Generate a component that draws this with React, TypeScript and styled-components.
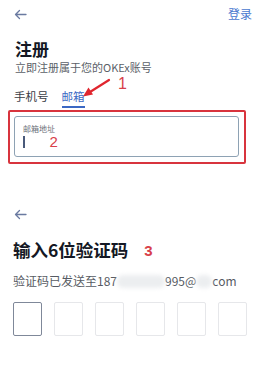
import React from 'react'
import styled, { createGlobalStyle } from 'styled-components'

const GlobalStyle = createGlobalStyle`
  html, body {
    margin: 0;
    padding: 0;
    background: #ffffff;
  }
  body {
    font-family: 'Noto Sans CJK SC', 'Noto Sans', sans-serif;
    color: #1b1f2a;
  }
`

const StyledPage = styled.div`
  position: relative;
  width: 278px;
  height: 367px;
  overflow: hidden;
  padding: 0 13px 0 14px;
  box-sizing: border-box;
`

const StyledHeader = styled.div`
  display: flex;
  align-items: center;
  justify-content: space-between;
  height: 28px;
  padding-right: 13px;
`

const StyledLoginLink = styled.span`
  font-size: 12px;
  line-height: 14px;
  color: #4a78cf;
  margin-top: -1px;
`

const StyledBack = styled.svg<{ $top: number }>`
  display: block;
  margin-top: ${({ $top }) => $top}px;
`

const StyledTitle = styled.h1`
  margin: 10px 0 0 1px;
  font-size: 17px;
  line-height: 22px;
  font-weight: 700;
  color: #141824;
  display: flex;
  align-items: center;
`

const StyledSubtitle = styled.p`
  margin: 0 0 0 1px;
  font-size: 11px;
  line-height: 14px;
  color: #5b5f68;
`

const StyledTabs = styled.div`
  display: flex;
  gap: 13px;
  margin-top: 14px;
`

const StyledTab = styled.span<{ $active?: boolean }>`
  font-size: 11.5px;
  line-height: 16px;
  padding-bottom: 2px;
  color: ${({ $active }) => ($active ? '#3b68c4' : '#3a3d45')};
  border-bottom: 2px solid
    ${({ $active }) => ($active ? '#3b68c4' : 'transparent')};
`

const StyledMarkFrame = styled.div`
  margin: 2px 0 0 -6px;
  width: 238px;
  height: 54px;
  box-sizing: border-box;
  border: 2px solid #d8343d;
  border-radius: 2px;
  padding: 4px 5px 0 4px;
`

const StyledInputBox = styled.div`
  height: 41px;
  box-sizing: border-box;
  border: 1.5px solid #8ea2b4;
  border-radius: 3px;
  padding: 7px 8px 0;
  position: relative;
`

const StyledInputLabel = styled.div`
  font-size: 8px;
  line-height: 10px;
  color: #6d717a;
`

const StyledCaretRow = styled.div`
  display: flex;
  align-items: center;
  gap: 25px;
  height: 15px;
`

const StyledCaret = styled.span`
  width: 1.5px;
  height: 12px;
  background: #4a5a7a;
`

const StyledMarkNumber = styled.span<{ $size?: number }>`
  font-family: 'Liberation Sans', Arial, sans-serif;
  font-size: ${({ $size }) => $size ?? 15}px;
  line-height: 1;
  color: #d8404a;
`

const StyledArrowMark = styled.div`
  position: absolute;
  left: 80px;
  top: 76px;
  display: flex;
  align-items: flex-start;
  gap: 6px;
`

const StyledCodeTitle = styled(StyledTitle)`
  margin-top: 19px;
  margin-left: -1px;
  font-size: 17.5px;
  gap: 16px;
`

const StyledCodeHint = styled.p`
  margin: 12px 0 0 -1px;
  font-size: 12px;
  line-height: 16px;
  color: #575b63;
  display: flex;
  align-items: center;
  white-space: nowrap;
`

const StyledBlur = styled.span<{ $width: number }>`
  display: inline-block;
  width: ${({ $width }) => $width}px;
  height: 13px;
  background: #eceef0;
  border-radius: 6px;
  filter: blur(2px);
`

const StyledCodeRow = styled.div`
  display: flex;
  gap: 12px;
  margin: 13px 0 0 -1px;
`

const StyledCodeCell = styled.div<{ $focused?: boolean }>`
  width: 29px;
  height: 34px;
  box-sizing: border-box;
  border: 1.5px solid ${({ $focused }) => ($focused ? '#7f8899' : '#e6e7ea')};
  border-radius: 2px;
`

const BackArrow = ({ top }: { top: number }) => (
  <StyledBack $top={top} width="13" height="11" viewBox="0 0 13 11">
    <path
      d="M12 5.5H1.5M5.5 1.5L1.5 5.5L5.5 9.5"
      fill="none"
      stroke="#6a7aa0"
      strokeWidth="1.3"
      strokeLinecap="round"
      strokeLinejoin="round"
    />
  </StyledBack>
)

const App = () => {
  return (
    <StyledPage>
      <GlobalStyle />
      <StyledHeader>
        <BackArrow top={0} />
        <StyledLoginLink>登录</StyledLoginLink>
      </StyledHeader>
      <StyledTitle>注册</StyledTitle>
      <StyledSubtitle>立即注册属于您的OKEx账号</StyledSubtitle>
      <StyledTabs>
        <StyledTab>手机号</StyledTab>
        <StyledTab $active>邮箱</StyledTab>
      </StyledTabs>
      <StyledArrowMark>
        <svg width="32" height="26" viewBox="0 0 32 26">
          <path d="M29 4L10 16" stroke="#e0262e" strokeWidth="2.2" strokeLinecap="round" />
          <path d="M3 20.5L8.5 11.5L13 18.5Z" fill="#e0262e" />
        </svg>
        <StyledMarkNumber $size={16}>1</StyledMarkNumber>
      </StyledArrowMark>
      <StyledMarkFrame>
        <StyledInputBox>
          <StyledInputLabel>邮箱地址</StyledInputLabel>
          <StyledCaretRow>
            <StyledCaret />
            <StyledMarkNumber $size={15}>2</StyledMarkNumber>
          </StyledCaretRow>
        </StyledInputBox>
      </StyledMarkFrame>
      <BackArrow top={45} />
      <StyledCodeTitle>
        输入6位验证码
        <StyledMarkNumber $size={15}>3</StyledMarkNumber>
      </StyledCodeTitle>
      <StyledCodeHint>
        验证码已发送至187
        <StyledBlur $width={48} />
        995@
        <StyledBlur $width={16} />
        com
      </StyledCodeHint>
      <StyledCodeRow>
        <StyledCodeCell $focused />
        <StyledCodeCell />
        <StyledCodeCell />
        <StyledCodeCell />
        <StyledCodeCell />
        <StyledCodeCell />
      </StyledCodeRow>
    </StyledPage>
  )
}

export default App
